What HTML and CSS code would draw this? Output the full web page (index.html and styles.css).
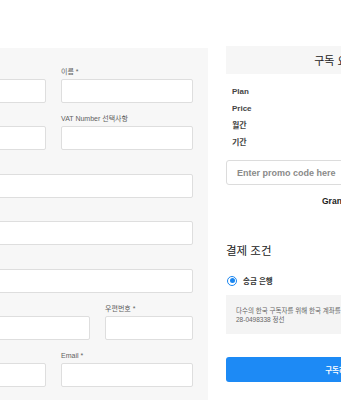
FILE: index.html
```html
<!DOCTYPE html>
<html lang="ko">
<head>
<meta charset="utf-8">
<link rel="stylesheet" href="styles.css">
</head>
<body>
<div class="page">
  <section class="form-panel">
    <div class="row two">
      <div class="field"><label>성 *</label><div class="input"></div></div>
      <div class="field"><label>이름 *</label><div class="input"></div></div>
    </div>
    <div class="row two">
      <div class="field"><label>회사명 선택사항</label><div class="input"></div></div>
      <div class="field"><label>VAT Number 선택사항</label><div class="input"></div></div>
    </div>
    <div class="row">
      <div class="field"><label>주소 *</label><div class="input"></div></div>
    </div>
    <div class="row">
      <div class="field"><label>상세 주소</label><div class="input"></div></div>
    </div>
    <div class="row">
      <div class="field"><label>도시 *</label><div class="input"></div></div>
    </div>
    <div class="row wide">
      <div class="field"><label>국가 *</label><div class="input"></div></div>
      <div class="field"><label>우편번호 *</label><div class="input"></div></div>
    </div>
    <div class="row two">
      <div class="field"><label>전화번호 *</label><div class="input"></div></div>
      <div class="field"><label>Email *</label><div class="input"></div></div>
    </div>
  </section>

  <aside class="summary">
    <div class="summary-head">구독 요약</div>
    <ul class="summary-list">
      <li>Plan</li>
      <li>Price</li>
      <li>월간</li>
      <li>기간</li>
    </ul>
    <div class="promo">Enter promo code here</div>
    <div class="grand">Grand Total</div>
    <h2 class="pay-title">결제 조건</h2>
    <div class="radio-row">
      <span class="radio"></span>
      <span class="radio-label">송금 은행</span>
    </div>
    <div class="bank-note">
      다수의 한국 구독자를 위해 한국 계좌를 개설했습니다. 국민은행<br>28-0498338 정선
    </div>
    <button class="submit">구독하기</button>
  </aside>
</div>
</body>
</html>
```

FILE: styles.css
```css
html, body {
  margin: 0;
  padding: 0;
  background: #ffffff;
}
body {
  font-family: "Liberation Sans", "Noto Sans CJK KR", sans-serif;
  color: #333;
  overflow: hidden;
}
.page {
  display: flex;
  align-items: flex-start;
  gap: 18px;
  margin-left: -101px;
  width: 560px;
}
.form-panel {
  flex: 0 0 309px;
  box-sizing: border-box;
  margin-top: 48px;
  padding: 19px 15px 20px 15px;
  background: #f7f7f7;
  display: flex;
  flex-direction: column;
  gap: 11.4px;
  min-height: 360px;
}
.row {
  display: grid;
  grid-template-columns: 1fr;
  gap: 15px;
}
.row.two {
  grid-template-columns: 1fr 1fr;
}
.row.wide {
  grid-template-columns: 2fr 1fr;
}
.field label {
  display: block;
  font-size: 7px;
  line-height: 9px;
  height: 9px;
  margin-bottom: 3px;
  color: #5f5f5f;
  font-weight: 400;
  white-space: nowrap;
}
.input {
  box-sizing: border-box;
  height: 24px;
  background: #fff;
  border: 1px solid #dedede;
  border-radius: 2px;
}

.summary {
  flex: 0 0 220px;
  margin-top: 46px;
  display: flex;
  flex-direction: column;
}
.summary-head {
  height: 28px;
  background: #f6f6f6;
  display: flex;
  align-items: center;
  justify-content: center;
  font-size: 11px;
  color: #222;
}
.summary-list {
  list-style: none;
  margin: 9px 0 0 0;
  padding: 0 6px;
}
.summary-list li {
  height: 17px;
  line-height: 17px;
  font-size: 8px;
  font-weight: 700;
  color: #444;
}
.promo {
  box-sizing: border-box;
  margin-top: 9px;
  height: 25px;
  border: 1px solid #dcdcdc;
  border-radius: 3px;
  padding-left: 10px;
  display: flex;
  align-items: center;
  font-size: 9px;
  font-weight: 700;
  color: #8a8a8a;
}
.grand {
  margin-top: 10px;
  padding-left: 96px;
  font-size: 8.5px;
  line-height: 12px;
  font-weight: 700;
  color: #222;
  white-space: nowrap;
}
.pay-title {
  margin: 36px 0 0 0;
  font-size: 11.5px;
  line-height: 16px;
  font-weight: 400;
  color: #222;
}
.radio-row {
  margin-top: 16px;
  display: flex;
  align-items: center;
  gap: 6px;
  padding-left: 1px;
}
.radio {
  box-sizing: border-box;
  width: 10px;
  height: 10px;
  border-radius: 50%;
  border: 1.5px solid #1a86f0;
  display: flex;
  align-items: center;
  justify-content: center;
}
.radio::after {
  content: "";
  width: 5px;
  height: 5px;
  border-radius: 50%;
  background: #1a86f0;
}
.radio-label {
  font-size: 7.5px;
  font-weight: 700;
  color: #333;
}
.bank-note {
  margin-top: 9px;
  background: #f4f4f4;
  padding: 11px 10px 10px 10px;
  font-size: 6.5px;
  line-height: 9px;
  color: #666;
  white-space: nowrap;
}
.submit {
  margin-top: 23px;
  height: 25px;
  border: none;
  border-radius: 3px;
  background: #1d8af5;
  color: #fff;
  font-family: inherit;
  font-size: 7.5px;
  font-weight: 700;
  padding-left: 12px;
}
```
